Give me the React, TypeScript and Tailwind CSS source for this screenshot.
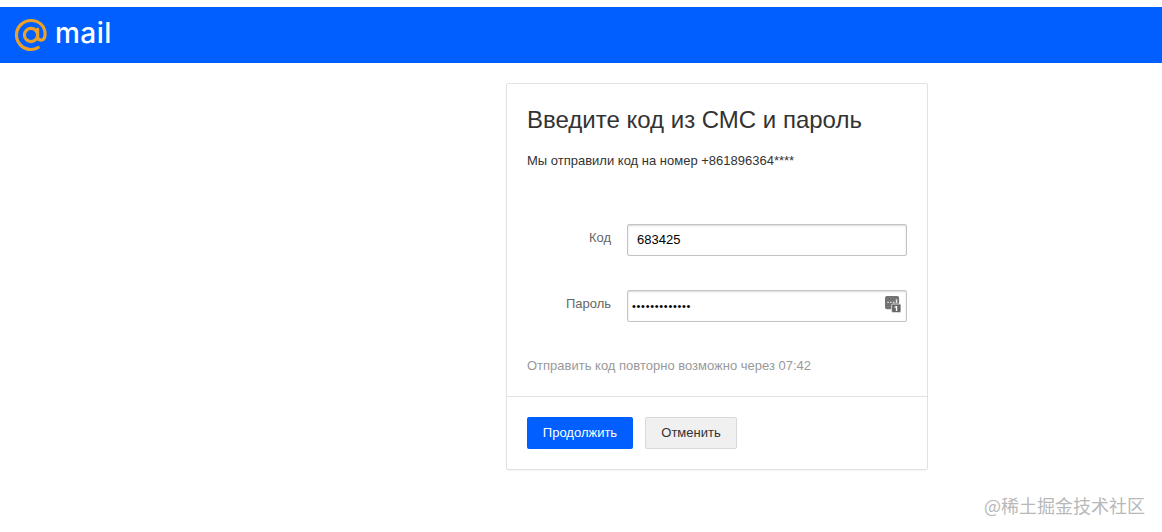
export default function App() {
  return (
    <div className="min-h-[532px] bg-white font-['Liberation_Sans',Arial,sans-serif] pt-[7px]">
      <header className="h-[56px] bg-[#005ffe] flex items-center pl-[14px]">
        <svg width="34" height="34" viewBox="0 0 34 34" fill="none" className="shrink-0">
          <circle cx="17" cy="17" r="6.6" stroke="#eba02a" strokeWidth="3.200" />
          <path d="M23.600 11v7.600c0 2.200 1.200 3.600 3.100 3.600 2.700 0 4.400-2.400 4.400-6.200C31.100 8.400 25.300 2.500 17 2.500 9 2.500 2.500 9 2.500 17S9 31.500 17 31.500c2.900 0 5.200-.7 7.200-2" stroke="#eba02a" strokeWidth="3.200" strokeLinecap="round" />
        </svg>
        <span className="ml-[7px] text-white text-[28px] leading-none font-medium font-['Inter',sans-serif] tracking-[0.5px] relative -top-[2px]">mail</span>
      </header>
      <main className="flex justify-start pl-[506px] pt-[20px]">
        <section className="w-[422px] h-[387px] border border-[#e2e2e2] rounded-[2px] flex flex-col shadow-[0_1px_1px_rgba(0,0,0,0.04)]">
          <div className="flex-1 px-[20px] pt-[21px]">
            <h1 className="text-[24px] leading-[30px] text-[#333333] font-normal">Введите код из СМС и пароль</h1>
            <p className="mt-[18px] text-[13px] leading-[16px] text-[#333333]">Мы отправили код на номер +861896364****</p>
            <div className="mt-[55px] flex items-center h-[32px]">
              <label className="w-[84px] text-right text-[13px] text-[#666666] relative -top-[2px]">Код</label>
              <input readOnly value="683425" className="ml-[16px] w-[280px] h-[32px] px-[9px] pb-[2px] text-[13px] text-black bg-white border border-[#c4c4c4] rounded-[2px] shadow-[inset_0_1px_2px_rgba(0,0,0,0.15)] outline-none" />
            </div>
            <div className="mt-[34px] flex items-center h-[32px]">
              <label className="w-[84px] text-right text-[13px] text-[#666666] relative -top-[2px]">Пароль</label>
              <div className="relative ml-[16px]">
                <input readOnly type="password" value="aaaaaaaaaaaaa" className="w-[280px] h-[32px] px-[4px] text-[11px] tracking-[0.7px] text-black bg-white border border-[#c4c4c4] rounded-[2px] shadow-[inset_0_1px_2px_rgba(0,0,0,0.15)] outline-none" />
                <svg width="16" height="17" viewBox="0 0 17 18" className="absolute right-[6px] top-[6px]">
                  <rect x="0" y="0" width="15" height="14" rx="2" fill="#747474" />
                  <path d="M2.500 6h1.500v1.500h-1.500zM5.500 6h1.500v1.500h-1.500zM8.500 6h1.500v1.500h-1.500zM11.500 3.500h1.500v4h-1.500z" fill="#e8e8e8" />
                  <rect x="7" y="8.500" width="10" height="9" rx="1.500" fill="#666666" stroke="#dddddd" strokeWidth="1" />
                  <path d="M11.500 10.500h1.500v5.500h-1.500zM10 11.700l1.500-1.200v1.500l-1.500.7z" fill="#fff" />
                </svg>
              </div>
            </div>
            <p className="mt-[36px] text-[13px] leading-[16px] text-[#999999]">Отправить код повторно возможно через 07:42</p>
          </div>
          <footer className="h-[73px] border-t border-[#e2e2e2] flex items-start gap-[12px] px-[20px] pt-[20px]">
            <button className="w-[106px] h-[32px] bg-[#005ffe] rounded-[2px] text-white text-[13px]">Продолжить</button>
            <button className="w-[92px] h-[32px] bg-[#f0f0f0] border border-[#d9d9d9] rounded-[2px] text-[#333333] text-[13px]">Отменить</button>
          </footer>
        </section>
      </main>
      <div className="flex justify-end pr-[17px] pt-[24px] text-[18px] leading-[22px] text-[#b8b8b8] font-['Noto_Sans_CJK_SC','Noto_Sans',sans-serif]">@稀土掘金技术社区</div>
    </div>
  );
}
